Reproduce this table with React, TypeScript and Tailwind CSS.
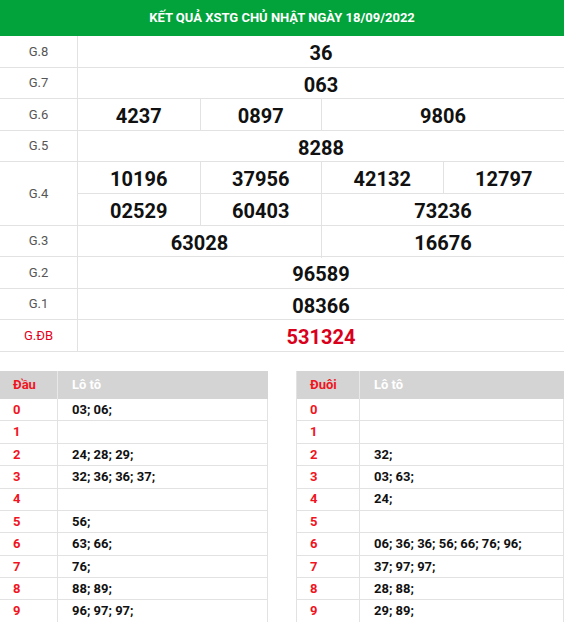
import React from 'react';

type Prize = { label: string; cells: { v: string; span: number }[][]; special?: boolean };

const prizes: Prize[] = [
  { label: 'G.8', cells: [[{ v: '36', span: 4 }]] },
  { label: 'G.7', cells: [[{ v: '063', span: 4 }]] },
  { label: 'G.6', cells: [[{ v: '4237', span: 1 }, { v: '0897', span: 1 }, { v: '9806', span: 2 }]] },
  { label: 'G.5', cells: [[{ v: '8288', span: 4 }]] },
  {
    label: 'G.4',
    cells: [
      [{ v: '10196', span: 1 }, { v: '37956', span: 1 }, { v: '42132', span: 1 }, { v: '12797', span: 1 }],
      [{ v: '02529', span: 1 }, { v: '60403', span: 1 }, { v: '73236', span: 2 }],
    ],
  },
  { label: 'G.3', cells: [[{ v: '63028', span: 2 }, { v: '16676', span: 2 }]] },
  { label: 'G.2', cells: [[{ v: '96589', span: 4 }]] },
  { label: 'G.1', cells: [[{ v: '08366', span: 4 }]] },
  { label: 'G.ĐB', cells: [[{ v: '531324', span: 4 }]], special: true },
];

const dau = ['03; 06;', '', '24; 28; 29;', '32; 36; 36; 37;', '', '56;', '63; 66;', '76;', '88; 89;', '96; 97; 97;'];
const duoi = ['', '', '32;', '03; 63;', '24;', '', '06; 36; 36; 56; 66; 76; 96;', '37; 97; 97;', '28; 88;', '29; 89;'];

const spanClass: Record<number, string> = { 1: 'col-span-1', 2: 'col-span-2', 4: 'col-span-4' };

function LotoTable({ title, rows, colW, bordered }: { title: string; rows: string[]; colW: string; bordered?: boolean }) {
  return (
    <div className={`w-[268px] ${bordered ? 'border-l border-[#e2e2e2]' : ''}`}>
      <div className="flex h-[28px] bg-[#d4d4d4] text-[13px] font-bold">
        <div className={`${colW} flex items-center pl-[13px] text-[#f0141e] border-r border-[#e8e8e8]`}>{title}</div>
        <div className="flex-1 flex items-center pl-[14px] text-white">Lô tô</div>
      </div>
      {rows.map((r, i) => (
        <div key={i} className="flex h-[22.4px] border-b border-[#e2e2e2] border-r text-[13px] font-bold">
          <div className={`${colW} flex items-center pl-[13px] text-[#f0141e] border-r border-[#e2e2e2]`}>{i}</div>
          <div className="flex-1 flex items-center pl-[14px] text-[#111]">{r}</div>
        </div>
      ))}
    </div>
  );
}

export default function App() {
  return (
    <div className="w-[564px] h-[622px] overflow-hidden bg-white" style={{ fontFamily: 'Roboto, "Noto Sans", sans-serif' }}>
      <div className="h-[36px] bg-[#02a33b] flex items-center justify-center text-white font-bold text-[13px] uppercase">
        Kết quả XSTG Chủ Nhật ngày 18/09/2022
      </div>
      <div>
        {prizes.map((p) => (
          <div key={p.label} className="flex border-b border-[#e2e2e2]">
            <div
              className={`w-[78px] shrink-0 flex items-center justify-center text-[13px] border-r border-[#e2e2e2] ${
                p.special ? 'text-[#e3001b]' : 'text-[#555]'
              }`}
            >
              {p.label}
            </div>
            <div className="flex-1">
              {p.cells.map((row, ri) => (
                <div key={ri} className={`grid grid-cols-4 ${ri > 0 ? 'h-[31.6px] border-t border-[#e2e2e2]' : 'h-[30.6px]'}`}>
                  {row.map((c, ci) => (
                    <div
                      key={ci}
                      className={`${spanClass[c.span]} flex items-center justify-center pt-[2px] text-[20px] font-bold ${
                        ci > 0 ? 'border-l border-[#e2e2e2]' : ''
                      } ${p.special ? 'text-[#d9001b]' : 'text-[#111]'}`}
                    >
                      {c.v}
                    </div>
                  ))}
                </div>
              ))}
            </div>
          </div>
        ))}
      </div>
      <div className="flex justify-between mt-[19px]">
        <LotoTable title="Đầu" rows={dau} colW="w-[58px]" />
        <LotoTable title="Đuôi" rows={duoi} colW="w-[63px]" bordered />
      </div>
    </div>
  );
}
